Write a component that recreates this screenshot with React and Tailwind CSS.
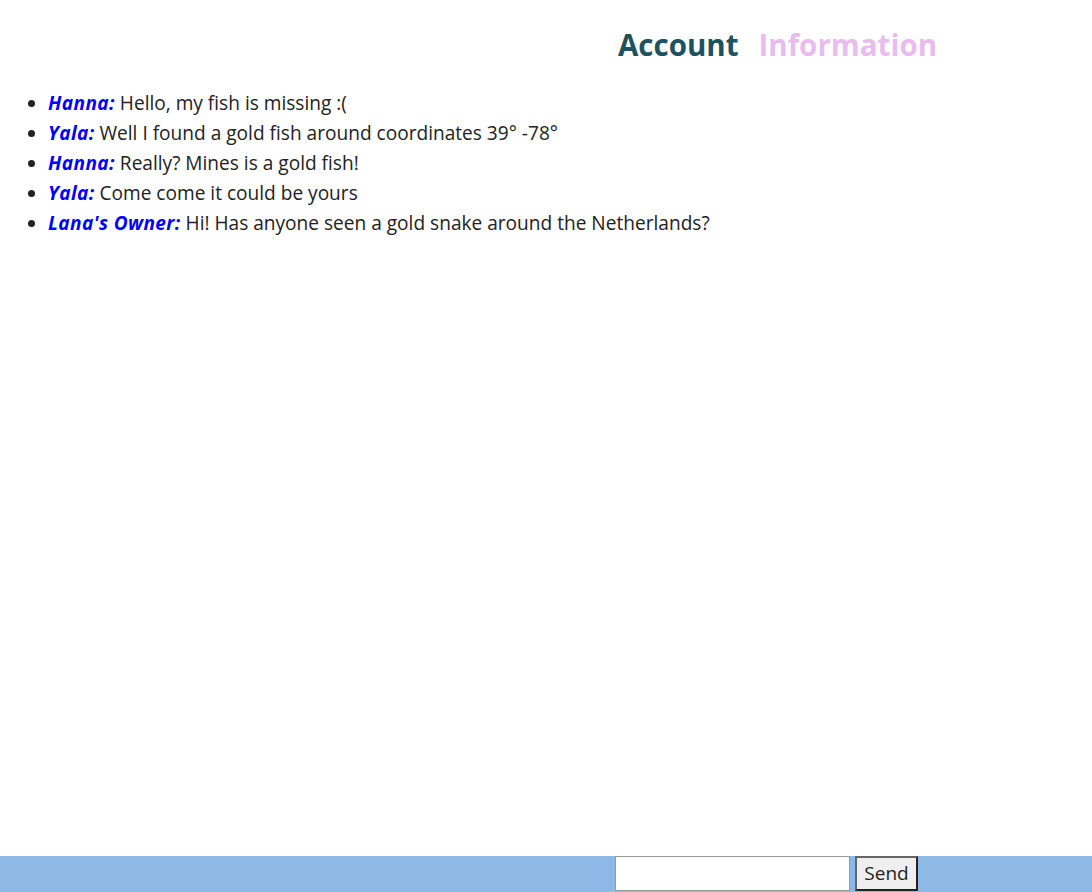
import React, { useState } from "react";

const messages = [
  { name: "Hanna:", text: "Hello, my fish is missing :(" },
  { name: "Yala:", text: "Well I found a gold fish around coordinates 39° -78°" },
  { name: "Hanna:", text: "Really? Mines is a gold fish!" },
  { name: "Yala:", text: "Come come it could be yours" },
  { name: "Lana's Owner:", text: "Hi! Has anyone seen a gold snake around the Netherlands?" },
];

export default function App() {
  const [msg, setMsg] = useState("");

  return (
    <div className="min-h-screen bg-white font-['Open_Sans','Noto_Sans',sans-serif] text-[#222]">
      <header className="flex gap-5 pl-[618px] pt-[24px] text-[29.5px] font-bold leading-[42px]">
        <span className="text-[#1d5360]">Account</span>
        <span className="text-[#e8bdee]">Information</span>
      </header>

      <ul className="mt-[22px] ml-2 list-disc pl-10 text-[19.1px] leading-[30px]">
        {messages.map((m, i) => (
          <li key={i}>
            <b className="italic text-[#0000ff] tracking-[0.02em]">{m.name}</b> {m.text}
          </li>
        ))}
      </ul>

      <div className="fixed bottom-0 left-0 flex h-[36px] w-full items-start gap-[5px] bg-[#8eb8e5] pl-[615px]">
        <input
          type="text"
          value={msg}
          onChange={(e) => setMsg(e.target.value)}
          className="h-[35px] w-[235px] border border-[#999] bg-white px-1"
        />
        <button className="h-[35px] w-[63px] border-2 border-[#222] border-t-[#666] border-l-[#666] bg-[#efefef] text-[19px] text-[#222] font-['Open_Sans',sans-serif]">
          Send
        </button>
      </div>
    </div>
  );
}
